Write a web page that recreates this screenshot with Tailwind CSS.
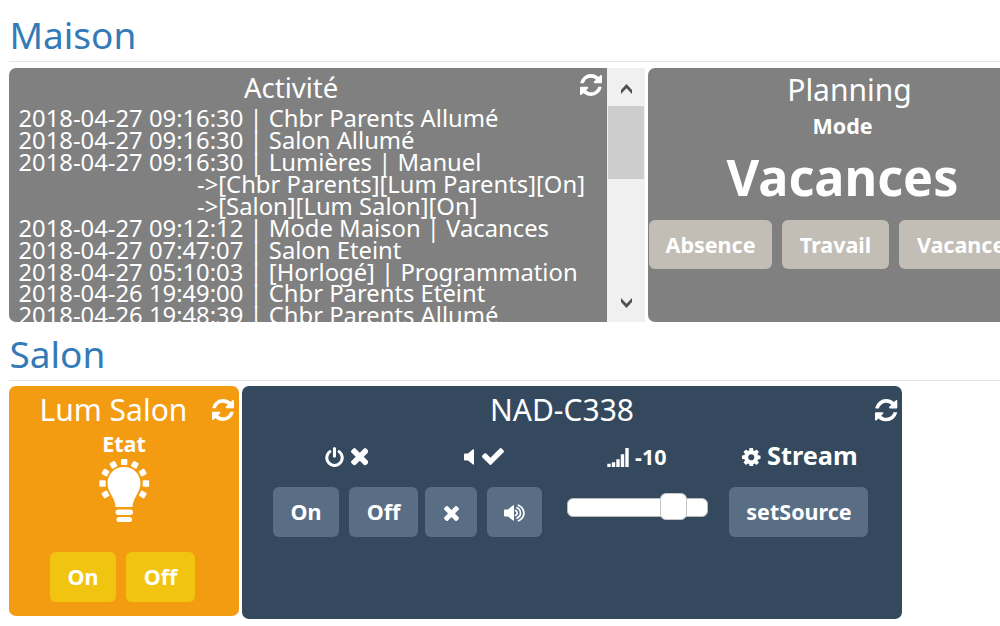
<!DOCTYPE html>
<html lang="fr">
<head>
<meta charset="utf-8">
<title>Maison</title>
<script src="https://cdn.jsdelivr.net/npm/@tailwindcss/browser@4"></script>
</head>
<body class="bg-white font-['Noto_Sans',sans-serif] w-[1000px] h-[626px] overflow-hidden">
<svg width="0" height="0" class="hidden">
  <symbol id="refresh" viewBox="0 0 1536 1536"><path d="M1511 928q0 5-1 7-64 268-268 434.5t-478 166.5q-146 0-282.5-55t-243.5-157l-129 129q-19 19-45 19t-45-19-19-45v-448q0-26 19-45t45-19h448q26 0 45 19t19 45-19 45l-137 137q71 66 161 102t187 36q134 0 250-65t186-179q11-17 53-117 8-23 30-23h192q13 0 22.5 9.5t9.5 22.5zm25-800v448q0 26-19 45t-45 19h-448q-26 0-45-19t-19-45 19-45l138-138q-148-137-349-137-134 0-250 65t-186 179q-11 17-53 117-8 23-30 23h-199q-13 0-22.5-9.5t-9.5-22.5v-7q65-268 270-434.5t480-166.5q146 0 284 55.5t245 156.5l130-129q19-19 45-19t45 19 19 45z"/></symbol>
  <symbol id="times" viewBox="302 366 1188 1188"><path d="M1490 1322q0 40-28 68l-136 136q-28 28-68 28t-68-28l-294-294-294 294q-28 28-68 28t-68-28l-136-136q-28-28-28-68t28-68l294-294-294-294q-28-28-28-68t28-68l136-136q28-28 68-28t68 28l294 294 294-294q28-28 68-28t68 28l136 136q28 28 28 68t-28 68l-294 294 294 294q28 28 28 68z"/></symbol>
</svg>

<section class="pl-[9px]">
  <h1 class="h-[62px] border-b border-[#e5e5e5] pl-[0.5px] pt-[10px] text-[37px] leading-[50px] text-[#337ab7]">Maison</h1>
  <div class="mt-[6px] flex h-[254px] text-white">
    <div class="relative w-[598px] shrink-0 overflow-hidden rounded-l-[7px] bg-[#808080]">
      <h2 class="h-[39px] pl-[235px] text-[27.5px] leading-[39px]">Activité</h2>
      <svg class="absolute left-[571px] top-[6px] size-[22px] fill-white"><use href="#refresh"/></svg>
      <div class="whitespace-pre pl-[9.5px] text-[23.8px] leading-[22px]"><div>2018-04-27 09:16:30 | Chbr Parents Allumé</div><div>2018-04-27 09:16:30 | Salon Allumé</div><div>2018-04-27 09:16:30 | Lumières | Manuel</div><div class="pl-[178.5px]">-&gt;[Chbr Parents][Lum Parents][On]</div><div class="pl-[178.5px]">-&gt;[Salon][Lum Salon][On]</div><div>2018-04-27 09:12:12 | Mode Maison | Vacances</div><div>2018-04-27 07:47:07 | Salon Eteint</div><div>2018-04-27 05:10:03 | [Horlogé] | Programmation</div><div class="-mt-px">2018-04-26 19:49:00 | Chbr Parents Eteint</div><div>2018-04-26 19:48:39 | Chbr Parents Allumé</div></div>
    </div>
    <div class="flex w-[38px] shrink-0 flex-col items-center bg-[#f0f0f0]">
      <svg class="h-[38px] w-[38px]" viewBox="0 0 38 38"><path d="M14 26V22L19.500 16L25 22V26L19.500 20.300Z" fill="#505050"/></svg>
      <div class="h-[73px] w-[36px] bg-[#cdcdcd]"></div>
      <svg class="mt-auto h-[38px] w-[38px]" viewBox="0 0 38 38"><path d="M14 14V18L19.500 24L25 18V14L19.500 19.700Z" fill="#505050"/></svg>
    </div>
    <div class="ml-[3px] w-[388px] shrink-0 rounded-[7px] bg-[#808080]">
      <h2 class="h-[43px] text-center pl-[15px] text-[30px] leading-[44px]">Planning</h2>
      <div class="h-[30px] pl-[1px] text-center text-[21.5px] font-bold leading-[30px]">Mode</div>
      <div class="h-[79px] pl-[1px] text-center text-[50.3px] font-bold leading-[72px]">Vacances</div>
      <div class="flex gap-[10px] pl-[1px] text-[21.5px] font-bold leading-[49px]">
        <div class="w-[123px] shrink-0 rounded-[6px] bg-[#c2beb6] text-center">Absence</div>
        <div class="w-[107px] shrink-0 rounded-[6px] bg-[#c2beb6] text-center">Travail</div>
        <div class="w-[134px] shrink-0 rounded-[6px] bg-[#c2beb6] pl-[1px] text-center">Vacances</div>
      </div>
    </div>
  </div>
</section>

<section class="pl-[9px]">
  <h1 class="h-[59px] border-b border-[#e5e5e5] pl-[0.5px] pt-[7px] text-[37px] leading-[50px] text-[#337ab7]">Salon</h1>
  <div class="mt-[5px] flex items-start gap-[3px] text-white">
    <div class="relative h-[230px] w-[230px] shrink-0 rounded-[7px] bg-[#f39c12]">
      <h2 class="h-[43px] pl-[30.5px] text-[30px] leading-[47px]">Lum Salon</h2>
      <svg class="absolute left-[203px] top-[13px] size-[22px] fill-white"><use href="#refresh"/></svg>
      <div class="h-[30px] text-center text-[21.5px] font-bold leading-[29px]">Etat</div>
      <svg class="ml-[89px] h-[66px] w-[52px] fill-white" viewBox="98 459 52 66">
        <path d="M124 467C114 467 107.500 474.500 107.500 483.500C107.500 492.500 115.500 498 115.500 507H132.500C132.500 498 140.500 492.500 140.500 483.500C140.500 474.500 134 467 124 467Z"/>
        <rect x="115.500" y="509.500" width="17.500" height="5.500" rx="2.700"/><rect x="116.500" y="517" width="15.500" height="5" rx="2.500"/>
        <rect x="121" y="459" width="6.400" height="6" rx="1"/>
        <rect x="99.300" y="480.300" width="6.400" height="6.400" rx="1"/><rect x="142.700" y="480.300" width="6.400" height="6.400" rx="1"/>
        <rect x="110.300" y="461.700" width="6.200" height="6.200" rx="1" transform="rotate(-30 113.400 464.800)"/><rect x="131.800" y="461.700" width="6.200" height="6.200" rx="1" transform="rotate(30 134.900 464.800)"/>
        <rect x="102.400" y="469.500" width="6.200" height="6.200" rx="1" transform="rotate(30 105.500 472.600)"/><rect x="139.700" y="469.500" width="6.200" height="6.200" rx="1" transform="rotate(-30 142.800 472.600)"/>
        <rect x="102.400" y="491.300" width="6.200" height="6.200" rx="1" transform="rotate(-30 105.500 494.400)"/><rect x="139.700" y="491.300" width="6.200" height="6.200" rx="1" transform="rotate(30 142.800 494.400)"/>
      </svg>
      <div class="mt-[27px] flex gap-[10px] pl-[41px] text-center text-[21.5px] font-bold leading-[50px]">
        <div class="w-[66px] rounded-[6px] bg-[#f1c40f]">On</div>
        <div class="w-[69px] rounded-[6px] bg-[#f1c40f]">Off</div>
      </div>
    </div>

    <div class="relative h-[233px] w-[660px] shrink-0 rounded-[7px] bg-[#34495e] font-bold">
      <h2 class="h-[56px] pl-[248px] text-[30px] font-normal leading-[47px]">NAD-C338</h2>
      <svg class="absolute left-[633px] top-[13px] size-[22.5px] fill-white"><use href="#refresh"/></svg>
      <div class="flex h-[30px] items-center">
        <svg class="ml-[82.5px] h-[20px] w-[19px] shrink-0 fill-white" viewBox="128 0 1536 1664"><path d="M1664 896q0 156-61 298t-164 245-245 164-298 61-298-61-245-164-164-245-61-298q0-182 80.500-343t226.500-270q43-32 95.500-25t83.500 50q32 42 24.500 94.500t-49.500 84.500q-98 74-151.500 181t-53.500 228q0 104 40.500 198.500t109.500 163.500 163.500 109.500 198.500 40.500 198.500-40.500 163.500-109.500 109.500-163.500 40.500-198.500q0-121-53.500-228t-151.500-181q-42-32-49.500-84.500t24.500-94.500q31-43 84-50t95 25q146 109 226.500 270t80.500 343zm-640-768v640q0 52-38 90t-90 38-90-38-38-90v-640q0-52 38-90t90-38 90 38 38 90z"/></svg>
        <svg class="ml-[7px] size-[17.500px] shrink-0 fill-white"><use href="#times"/></svg>
        <svg class="ml-[96px] h-[16px] w-[10px] shrink-0 fill-white" viewBox="0 0 10 16"><path d="M0 5.500Q0 4.500 1 4.500H4L9 .2Q10 0 10 1V15Q10 16 9 15.500L4 11.500H1Q0 11.500 0 10.500Z"/></svg>
        <svg class="ml-[8px] mb-[1px] h-[17px] w-[22px] shrink-0 fill-white" viewBox="121 334 1550 1188"><path d="M1671 566q0 40-28 68l-724 724-136 136q-28 28-68 28t-68-28l-136-136-362-362q-28-28-28-68t28-68l136-136q28-28 68-28t68 28l294 295 656-657q28-28 68-28t68 28l136 136q28 28 28 68z"/></svg>
        <svg class="ml-[103px] h-[19px] w-[22px] shrink-0 fill-white" viewBox="0 0 22 19"><path d="M.3 15.700h3.400v3.300H.3zM4.800 14.200h3.400V19H4.800zM9.300 11.200h3.400V19H9.300zM13.800 6.200h3.400V19h-3.400zM18.300 0h3.400v19h-3.400z"/></svg>
        <span class="ml-[6px] w-[31px] text-[21.5px] leading-[30px]">-10</span>
        <svg class="ml-[76px] size-[18.500px] shrink-0 fill-white" viewBox="128 128 1536 1536"><path d="M1152 896q0-106-75-181t-181-75-181 75-75 181 75 181 181 75 181-75 75-181zm512-109v222q0 12-8 23t-20 13l-185 28q-19 54-39 91 35 50 107 138 10 12 10 25t-9 23q-27 37-99 108t-94 71q-12 0-26-9l-138-108q-44 23-91 38-16 136-29 186-7 28-36 28h-222q-14 0-24.500-8.500t-11.500-21.500l-28-184q-49-16-90-37l-141 107q-10 9-25 9-14 0-25-11-126-114-165-168-7-10-7-23 0-12 8-23 15-21 51-66.500t54-70.500q-27-50-41-99l-183-27q-13-2-21-12.500t-8-23.500v-222q0-12 8-23t19-13l186-28q14-46 39-92-40-57-107-138-10-12-10-24 0-10 9-23 26-36 98.500-107.500t94.500-71.500q13 0 26 10l138 107q44-23 91-38 16-136 29-186 7-28 36-28h222q14 0 24.500 8.500t11.500 21.500l28 184q49 16 90 37l142-107q9-9 24-9 13 0 25 10 129 119 165 170 7 8 7 22 0 12-8 23-15 21-51 66.500t-54 70.500q26 50 41 98l183 28q13 2 21 12.500t8 23.500z"/></svg>
        <span class="ml-[6.5px] pb-[4px] text-[25.3px] leading-[30px]">Stream</span>
      </div>
      <div class="mt-[15px] flex h-[50px] pl-[31px] text-center text-[21.5px] leading-[50px]">
        <div class="w-[66px] rounded-[6px] bg-[#596e84]">On</div>
        <div class="ml-[10px] w-[69px] rounded-[6px] bg-[#596e84]">Off</div>
        <div class="ml-[7px] flex w-[52px] items-center justify-center rounded-[6px] bg-[#596e84]"><svg class="mt-[2px] size-[15px] fill-white"><use href="#times"/></svg></div>
        <div class="ml-[10px] flex w-[55px] items-center justify-center rounded-[6px] bg-[#596e84]">
          <svg class="mt-[1px] h-[18px] w-[21px]" viewBox="0 0 21 18"><path fill="#fff" d="M0 6.500Q0 5.500 1 5.500H4L9 1.200Q10 1 10 2V16Q10 17 9 16.500L4 12.500H1Q0 12.500 0 11.500Z"/><path fill="none" stroke="#fff" stroke-width="1.700" stroke-linecap="round" d="M11.500 6.500Q13.200 7.300 13.200 9T11.500 11.500M13 3.800Q16.500 5.500 16.500 9T13 14.200M14.500 1.200Q19.900 4 19.900 9T14.500 16.800"/></svg>
        </div>
        <div class="relative ml-[25px] mt-[11px] h-[19px] w-[141px] rounded-[6px] border border-[#bbb] bg-white"><div class="absolute -top-[6px] left-[92px] h-[27px] w-[27px] rounded-[6px] border border-[#c5c5c5] bg-white"></div></div>
        <div class="ml-[21px] w-[139px] rounded-[6px] bg-[#596e84] pl-[1px]">setSource</div>
      </div>
    </div>
  </div>
</section>
</body>
</html>
